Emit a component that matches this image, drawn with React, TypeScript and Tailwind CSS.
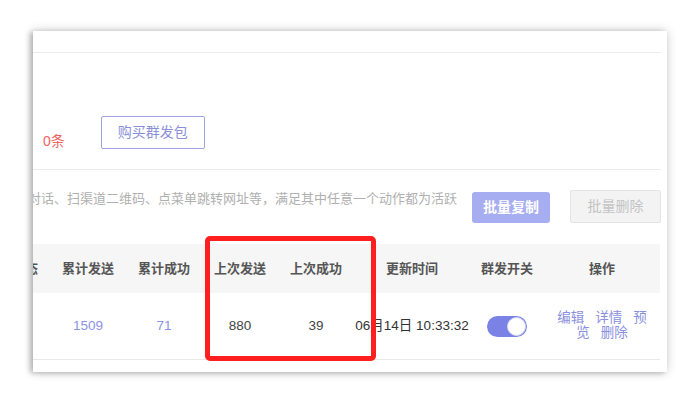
const FONT = { fontFamily: '"Liberation Sans", "Noto Sans CJK SC", sans-serif' }

const columns = [
  { key: 'status', title: '状态', width: 'w-[50px]' },
  { key: 'totalSent', title: '累计发送', width: 'w-[76px]' },
  { key: 'totalOk', title: '累计成功', width: 'w-[76px]' },
  { key: 'lastSent', title: '上次发送', width: 'w-[76px]' },
  { key: 'lastOk', title: '上次成功', width: 'w-[76px]' },
  { key: 'updated', title: '更新时间', width: 'w-[116px]' },
  { key: 'switch', title: '群发开关', width: 'w-[74px]' },
  { key: 'ops', title: '操作', width: 'w-[116px]' },
]

function Toggle({ on }: { on: boolean }) {
  return (
    <span
      className={`relative inline-flex w-[40px] h-[21px] rounded-full ${on ? 'bg-[#7a83e5]' : 'bg-gray-300'}`}
    >
      <span
        className={`absolute top-[1px] w-[19px] h-[19px] rounded-full bg-white border border-[#d6d8ee] ${on ? 'right-[1px]' : 'left-[1px]'}`}
      />
    </span>
  )
}

export default function App() {
  const row = {
    totalSent: 1509,
    totalOk: 71,
    lastSent: 880,
    lastOk: 39,
    updated: '06月14日 10:33:32',
  }

  return (
    <div className="relative w-[700px] h-[401px] bg-white overflow-hidden pt-[31px] pl-[33px]" style={FONT}>
      <div className="w-[634px] h-[341px] bg-white overflow-hidden pr-[6px] shadow-[0_0_10px_rgba(0,0,0,0.2),-3px_1px_5px_rgba(0,0,0,0.22)]">
        {/* top strip */}
        <div className="h-[22px] border-b border-[#ebebeb]" />

        {/* package info */}
        <div className="h-[117px] pt-[63px] border-b border-[#ebebeb] flex items-end pb-[20px]">
          <span className="ml-[10px] text-[14px] leading-[16px] text-[#f06464]">0条</span>
          <button className="ml-[36px] w-[104px] h-[33px] border border-[#9da3e6] rounded-[2px] text-[14px] text-[#8a90d8] bg-white">
            购买群发包
          </button>
        </div>

        {/* tips + batch actions */}
        <div className="pt-[20px] flex justify-end items-start">
          <span className="shrink-0 whitespace-nowrap text-[13px] leading-[18px] text-[#b0b0b0]">
            与公众号对话、扫渠道二维码、点菜单跳转网址等，满足其中任意一个动作都为活跃
          </span>
          <button className="shrink-0 ml-[15px] mt-[2px] w-[78px] h-[31px] rounded-[3px] bg-[#a6adf1] text-white text-[14px] font-bold">
            批量复制
          </button>
          <button className="shrink-0 ml-[20px] w-[91px] h-[33px] rounded-[2px] bg-[#f3f3f3] border border-[#e4e4e4] text-[#c3c3c3] text-[14px]">
            批量删除
          </button>
        </div>

        {/* table */}
        <div className="mt-[21px] mr-[1px]">
          <div className="h-[49px] bg-[#f6f6f7] flex justify-end items-center">
            {columns.map((c) => (
              <div key={c.key} className={`${c.width} shrink-0 text-center text-[13px] font-bold text-[#555]`}>
                {c.title}
              </div>
            ))}
          </div>
          <div className="h-[67px] border-b border-[#e8e8e8] flex justify-end items-center text-[13.5px]">
            <div className="w-[50px] shrink-0" />
            <div className="w-[76px] shrink-0 text-center text-[#8b92e6]">{row.totalSent}</div>
            <div className="w-[76px] shrink-0 text-center text-[#8b92e6]">{row.totalOk}</div>
            <div className="w-[76px] shrink-0 text-center text-[#444]">{row.lastSent}</div>
            <div className="w-[76px] shrink-0 text-center text-[#444]">{row.lastOk}</div>
            <div className="w-[116px] shrink-0 text-center text-[#333] whitespace-nowrap">{row.updated}</div>
            <div className="w-[74px] shrink-0 flex justify-center">
              <Toggle on />
            </div>
            <div className="w-[116px] shrink-0">
              <div className="w-[96px] mx-auto text-center text-[13.5px] leading-[15px] text-[#8a90e0] -mt-[2px]">
                <span className="mr-[11px]">编辑</span>
                <span className="mr-[11px]">详情</span>
                <span className="mr-[11px]">预览</span>
                <span>删除</span>
              </div>
            </div>
          </div>
        </div>
      </div>

      {/* highlight annotation */}
      <div className="absolute left-[205px] top-[236px] w-[171px] h-[125px] border-[5px] border-[#ff1f1f] rounded-[5px] pointer-events-none" />
    </div>
  )
}
